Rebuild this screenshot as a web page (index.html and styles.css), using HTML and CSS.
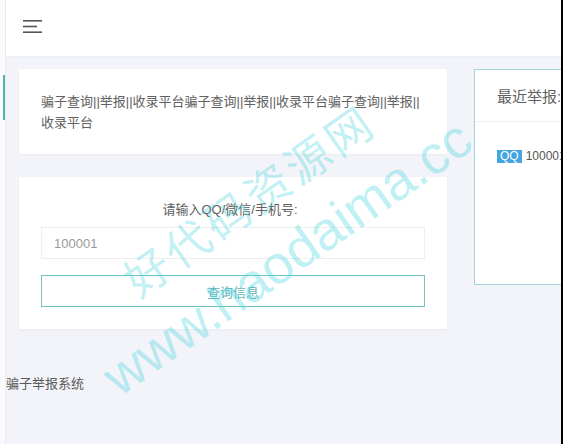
FILE: index.html
```html
<!DOCTYPE html>
<html lang="zh-CN">
<head>
<meta charset="utf-8">
<title>骗子举报系统</title>
<link rel="stylesheet" href="styles.css">
</head>
<body>
<div class="frame">
  <aside class="sidebar">
    <span class="sidebar-active"></span>
  </aside>
  <div class="main">
    <header class="topbar">
      <svg class="menu-icon" width="20" height="15" viewBox="0 0 20 15" aria-hidden="true">
        <rect x="0" y="1" width="19" height="1.6" fill="#555"/>
        <rect x="0" y="6.7" width="14" height="1.6" fill="#555"/>
        <rect x="0" y="12.4" width="19" height="1.6" fill="#555"/>
      </svg>
    </header>
    <div class="content">
      <div class="col-left">
        <section class="card intro">
          <p>骗子查询||举报||收录平台骗子查询||举报||收录平台骗子查询||举报||收录平台</p>
        </section>
        <section class="card search">
          <div class="search-label">请输入QQ/微信/手机号:</div>
          <input class="search-input" type="text" value="100001">
          <button class="search-btn" type="button">查询信息</button>
        </section>
      </div>
      <section class="recent">
        <div class="recent-head">最近举报:</div>
        <div class="recent-body">
          <div class="recent-item"><span class="badge">QQ</span><span class="recent-num">100001</span></div>
        </div>
      </section>
    </div>
    <footer class="footer">骗子举报系统</footer>
  </div>
  <div class="edge"></div>
</div>
<div class="watermark" aria-hidden="true">
  <span class="wm wm-cn">好代码资源网</span>
  <span class="wm wm-en">www.haodaima.cc</span>
</div>
</body>
</html>
```
FILE: styles.css
```css
html, body {
  margin: 0;
  padding: 0;
  height: 100%;
}
body {
  background: #f3f4f9;
  font-family: "Liberation Sans", "Noto Sans CJK SC", sans-serif;
  color: #666;
  overflow: hidden;
  position: relative;
}
.frame {
  display: flex;
  height: 444px;
}
.sidebar {
  width: 5px;
  flex: none;
  background: #fbfbfd;
  border-right: 1px solid #ececef;
  position: relative;
}
.sidebar-active {
  position: absolute;
  left: 3px;
  top: 75px;
  width: 2px;
  height: 45px;
  background: #4db3ab;
}
.main {
  flex: 1;
  min-width: 0;
  overflow: hidden;
}
.edge {
  width: 2px;
  flex: none;
  background: #000;
}
.topbar {
  height: 56px;
  background: #fff;
  box-shadow: 0 1px 2px rgba(0, 0, 0, 0.03);
  display: flex;
  align-items: center;
  padding-left: 17px;
}
.menu-icon {
  display: block;
  margin-top: -4px;
}
.content {
  display: flex;
  gap: 27px;
  padding: 13px 0 0 13px;
  align-items: flex-start;
}
.col-left {
  width: 428px;
  flex: none;
  display: flex;
  flex-direction: column;
  gap: 23px;
}
.card {
  background: #fff;
  box-shadow: 0 1px 3px rgba(0, 0, 0, 0.04);
}
.intro {
  padding: 22px 22px 21px;
}
.intro p {
  margin: 0;
  font-size: 13px;
  line-height: 21px;
  color: #626262;
}
.search {
  padding: 23px 22px 22px;
  display: flex;
  flex-direction: column;
}
.search-label {
  text-align: center;
  font-size: 13px;
  line-height: 20px;
  color: #5e5e5e;
  margin-bottom: 7px;
  padding-right: 6px;
}
.search-input {
  box-sizing: border-box;
  height: 32px;
  width: 100%;
  border: 1px solid #eeeeee;
  padding: 0 12px;
  font-family: "Liberation Sans", "Noto Sans CJK SC", sans-serif;
  font-size: 13px;
  color: #9a9a9a;
  outline: none;
  background: #fff;
  margin: 0;
}
.search-btn {
  box-sizing: border-box;
  margin: 16px 0 0;
  height: 32px;
  width: 100%;
  border: 1px solid #72c3c3;
  background: #fff;
  color: #62b4bb;
  font-family: "Liberation Sans", "Noto Sans CJK SC", sans-serif;
  font-size: 13px;
  padding: 0;
}
.recent {
  flex: none;
  width: 240px;
  height: 216px;
  box-sizing: border-box;
  background: #fff;
  border: 1px solid #a3d5da;
}
.recent-head {
  height: 52px;
  box-sizing: border-box;
  border-bottom: 1px solid #f0f0f0;
  padding-left: 22px;
  display: flex;
  align-items: center;
  font-size: 15px;
  color: #5f5f5f;
}
.recent-body {
  padding: 28px 22px 0 22px;
}
.recent-item {
  display: flex;
  align-items: center;
  gap: 4px;
  font-size: 12px;
  line-height: 13px;
}
.badge {
  background: #45a5e1;
  color: #fff;
  padding: 0 3px;
  font-size: 12px;
  line-height: 13px;
}
.recent-num {
  color: #555;
}
.footer {
  margin-top: 45px;
  font-size: 13px;
  line-height: 20px;
  color: #5a5a5a;
}
.watermark {
  position: absolute;
  inset: 0;
  pointer-events: none;
  overflow: hidden;
}
.wm {
  position: absolute;
  white-space: nowrap;
  color: rgba(60, 210, 220, 0.33);
  transform: rotate(-35deg);
  transform-origin: center center;
}
.wm-cn {
  left: 101px;
  top: 176px;
  width: 294px;
  text-align: center;
  font-family: "Noto Sans CJK SC", sans-serif;
  font-weight: 400;
  font-size: 45px;
  line-height: 46px;
  letter-spacing: 4px;
}
.wm-en {
  left: 68px;
  top: 230px;
  width: 438px;
  text-align: center;
  font-family: "Liberation Sans", sans-serif;
  font-size: 54px;
  line-height: 54px;
}
```
